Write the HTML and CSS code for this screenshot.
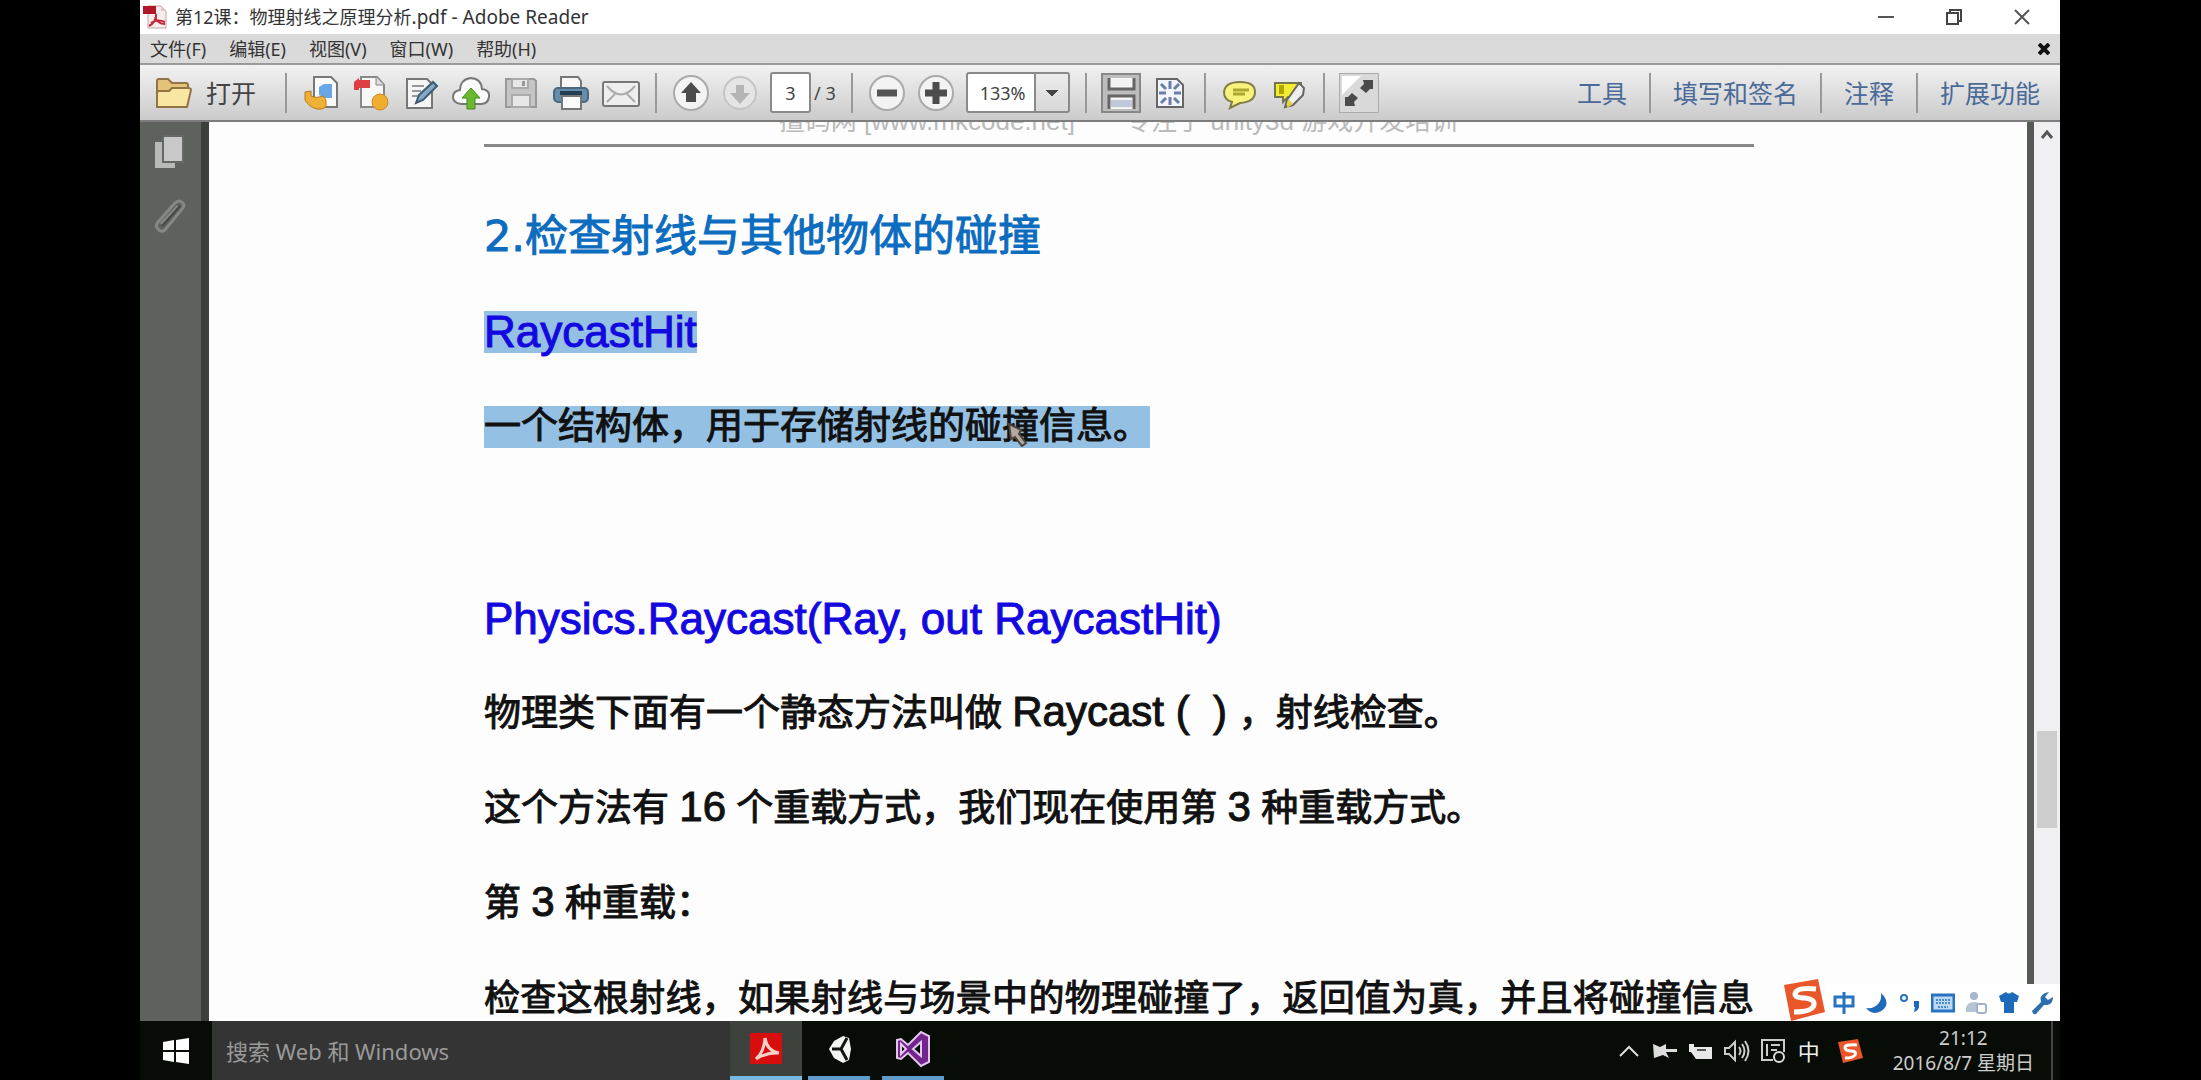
FILE: index.html
```html
<!DOCTYPE html>
<html lang="zh-CN">
<head>
<meta charset="utf-8">
<title>第12课：物理射线之原理分析.pdf - Adobe Reader</title>
<link rel="stylesheet" href="styles.css">
</head>
<body>
<div class="desktop">
  <header class="titlebar">
    <svg class="title-icon" viewBox="0 0 24 24"><path d="M5 1h13l5 5v17H5z" fill="#f7ecec" stroke="#c9a0a4"/><path d="M18 1v5h5" fill="#e4c4c6"/><path d="M0 1h13v8H0z" fill="#b01828"/><path d="M13 9c1 5-3 10-7 12M12 12c2 5 6 7 10 7M8 18c4-3 9-3 14-1" fill="none" stroke="#c2283a" stroke-width="2"/></svg>
    <h1 class="title-text">第12课：物理射线之原理分析<span class="title-latin">.pdf - Adobe Reader</span></h1>
    <div class="window-buttons">
      <button class="win-btn" aria-label="最小化"><svg viewBox="0 0 18 18"><path d="M1 9h16" stroke="#555" stroke-width="2"/></svg></button>
      <button class="win-btn" aria-label="还原"><svg viewBox="0 0 18 18"><path d="M5 5V2h11v11h-3M2 5h11v11H2z" fill="none" stroke="#444" stroke-width="2"/></svg></button>
      <button class="win-btn" aria-label="关闭"><svg viewBox="0 0 18 18"><path d="M2 2l14 14M16 2L2 16" stroke="#555" stroke-width="2"/></svg></button>
    </div>
  </header>

  <nav class="menubar">
    <button class="menu-item">文件(F)</button>
    <button class="menu-item">编辑(E)</button>
    <button class="menu-item">视图(V)</button>
    <button class="menu-item">窗口(W)</button>
    <button class="menu-item">帮助(H)</button>
    <button class="menu-close" aria-label="关闭文档"><svg viewBox="0 0 12 12"><path d="M1 1l10 10M11 1L1 11" stroke="#111" stroke-width="4"/></svg></button>
  </nav>

  <div class="toolbar">
    <button class="open-btn">
      <svg class="icon" viewBox="0 0 38 38"><path d="M3 32V7q0-2 2-2h9l4 4h14q2 0 2 2v5" fill="#e3c27a" stroke="#927443" stroke-width="2"/><path d="M3 33V19q0-2 2-2h10l3-3h16q3 0 3 2l-4 17z" fill="#fae6a3" stroke="#927443" stroke-width="2"/></svg>
      <span>打开</span>
    </button>
    <span class="sep"></span>
    <div class="tools tools-wide">
      <button class="tool" aria-label="创建 PDF"><svg class="icon" viewBox="0 0 38 38"><path d="M12 3h17l6 6v24H12z" fill="#fafafa" stroke="#777" stroke-width="2"/><path d="M17 13l5-3h8v14h-7l-6-3z" fill="#68a7e6"/><path d="M3 18l6-1v5q5 3 12 0l3 4v7q-4 3-9 2-8-2-12-9z" fill="#efb038" stroke="#b87918"/></svg></button>
      <button class="tool" aria-label="转换 PDF"><svg class="icon" viewBox="0 0 38 38"><path d="M9 3h16l7 8v22H9z" fill="#f7f7f7" stroke="#888" stroke-width="2"/><path d="M24 3v8h8" fill="#ddd" stroke="#888"/><path d="M2 8l5-4v2h11v8H7v2H2z" fill="#dc3e42"/><circle cx="28" cy="28" r="8" fill="#f0ae30" stroke="#cf8b20"/></svg></button>
      <button class="tool" aria-label="编辑"><svg class="icon" viewBox="0 0 38 38"><path d="M5 5h20l5 5v24H5z" fill="#f5f5f5" stroke="#777" stroke-width="2"/><path d="M10 12h12M10 17h9M10 22h6" stroke="#999" stroke-width="2"/><path d="M14 29l3-8 14-13 4 4-14 14z" fill="#82aac7" stroke="#3c5b72" stroke-width="2"/></svg></button>
      <button class="tool" aria-label="上传"><svg class="icon" viewBox="0 0 38 38"><path d="M9 30q-8-1-8-7 0-6 7-7 0-10 10-12 11 0 12 11 8 1 7 8-1 7-8 7z" fill="#fafafa" stroke="#777" stroke-width="2"/><path d="M19 14l9 10h-5v11h-8V24h-5z" fill="#6cb82c" stroke="#438a1b"/></svg></button>
      <button class="tool" aria-label="保存"><svg class="icon" viewBox="0 0 38 38"><path d="M4 5h28l2 2v26H4z" fill="#c5c5c5" stroke="#999" stroke-width="2"/><path d="M10 5h16v9H10zM10 21h18v12H10z" fill="#e7e7e7" stroke="#aaa" stroke-width="2"/><path d="M20 7h3v5h-3z" fill="#999"/></svg></button>
      <button class="tool" aria-label="打印"><svg class="icon" viewBox="0 0 38 38"><path d="M9 3h17l3 4v9H9z" fill="#f8f8f8" stroke="#777" stroke-width="2"/><rect x="2" y="14" width="34" height="14" rx="4" fill="#648ead" stroke="#4c687c" stroke-width="2"/><path d="M8 19h22" stroke="#263e52" stroke-width="4"/><path d="M10 22h19v13H10z" fill="#fafafa" stroke="#777" stroke-width="2"/></svg></button>
      <button class="tool" aria-label="邮件"><svg class="icon" viewBox="0 0 38 38"><rect x="1" y="8" width="36" height="24" rx="2" fill="#eee" stroke="#777" stroke-width="2"/><path d="M5 12q14 17 28 0M5 28l8-8M33 28l-8-8" fill="none" stroke="#aaa" stroke-width="2"/></svg></button>
    </div>
    <span class="sep"></span>
    <div class="tools">
      <button class="tool" aria-label="上一页"><svg class="icon" viewBox="0 0 38 38"><circle cx="19" cy="19" r="17" fill="#f3f3f3" stroke="#aaa" stroke-width="2"/><path d="M19 8l10 11h-5v9H14v-9H9z" fill="#4c4c4c"/></svg></button>
      <button class="tool" aria-label="下一页"><svg class="icon" viewBox="0 0 38 38"><circle cx="19" cy="19" r="16" fill="#e5e5e5" stroke="#c5c5c5" stroke-width="2"/><path d="M19 30L9 19h6v-8h8v8h6z" fill="#b4b4b4"/></svg></button>
      <div class="pager"><input class="page-input" value="3" aria-label="页码"><span>/ 3</span></div>
    </div>
    <span class="sep"></span>
    <div class="tools">
      <button class="tool" aria-label="缩小"><svg class="icon" viewBox="0 0 38 38"><circle cx="19" cy="19" r="17" fill="#f3f3f3" stroke="#aaa" stroke-width="2"/><path d="M9 19h20" stroke="#555" stroke-width="7"/></svg></button>
      <button class="tool" aria-label="放大"><svg class="icon" viewBox="0 0 38 38"><circle cx="19" cy="19" r="17" fill="#f3f3f3" stroke="#aaa" stroke-width="2"/><path d="M8 19h22M19 8v22" stroke="#4c4c4c" stroke-width="7"/></svg></button>
      <select class="zoom-select" aria-label="缩放比例"><option>133%</option></select>
    </div>
    <span class="sep"></span>
    <div class="tools">
      <button class="tool tool-pressed" aria-label="适合宽度"><svg class="icon" viewBox="0 0 38 38"><path d="M7 4v11h25V4M7 35V22h25v13" fill="#f4f4f4" stroke="#666" stroke-width="3"/><path d="M9 26h21v7H9z" fill="#c0c8dc"/></svg></button>
      <button class="tool" aria-label="适合页面"><svg class="icon" viewBox="0 0 38 38"><path d="M6 5h20l6 6v22H6z" fill="#f2f5fb" stroke="#666" stroke-width="2"/><path d="M19 7v8M19 31v-8M8 19h7M30 19h-7M10 10l5 5M28 10l-5 5M10 29l5-5M28 29l-5-5" stroke="#6b7ea8" stroke-width="3"/></svg></button>
    </div>
    <span class="sep"></span>
    <div class="tools">
      <button class="tool" aria-label="添加附注"><svg class="icon" viewBox="0 0 38 38"><path d="M11 28q-8-2-8-10Q4 8 19 8t15 10q0 10-15 11l-10 5z" fill="#f7f27c" stroke="#817d48" stroke-width="2"/><path d="M12 16h16M12 20h12" stroke="#aca52e" stroke-width="3"/></svg></button>
      <button class="tool" aria-label="高亮文本"><svg class="icon" viewBox="0 0 38 38"><path d="M5 9h26v14H18l-5 5v-5H5z" fill="#f3ec31" stroke="#77754b" stroke-width="2"/><path d="M9 11h5v9H9z" fill="#b1a500"/><path d="M17 26L29 9l5 5-1 7-10 10-8 2z" fill="#eee" stroke="#666" stroke-width="2"/><path d="M18 25l5 5-6 4z" fill="#e6d528"/></svg></button>
    </div>
    <span class="sep"></span>
    <button class="tool tool-framed" aria-label="阅读模式"><svg class="icon" viewBox="0 0 38 38"><path d="M2 2h19L2 21z" fill="#fff"/><path d="M23 6h10v9h-3l-4 4-6-5 4-4zM15 32H5v-9h3l4-4 6 5-4 4z" fill="#4b4b4b"/></svg></button>
    <div class="panels">
      <button class="panel-btn">工具</button>
      <button class="panel-btn">填写和签名</button>
      <button class="panel-btn">注释</button>
      <button class="panel-btn">扩展功能</button>
    </div>
  </div>

  <div class="workspace">
    <aside class="sidebar">
      <button class="side-btn" aria-label="页面缩略图"><svg class="side-icon" viewBox="0 0 32 34"><path d="M1 7h20v26H1z" fill="#b8bab7"/><path d="M9 1h20v26H9z" fill="#c8c8c8" stroke="#656965" stroke-width="2"/></svg></button>
      <button class="side-btn" aria-label="附件"><svg class="side-icon" viewBox="0 0 32 34"><path d="M7 25L24 7M4 23L21 4q4-4 8 0 2 3-1 6L11 31q-4 3-7-1-3-3 0-7z" fill="none" stroke="#858884" stroke-width="3"/><path d="M8 27L26 7" stroke="#444944" stroke-width="2"/></svg></button>
    </aside>
    <main class="page">
      <div class="page-header"><span>擅码网 [www.mkcode.net]</span><span>专注于 unity3d 游戏开发培训</span></div>
      <section class="topic">
        <h2 class="topic-title">2.检查射线与其他物体的碰撞</h2>
        <h3 class="api"><mark class="selected">RaycastHit</mark></h3>
        <p class="line"><mark class="selected">一个结构体，用于存储射线的碰撞信息。</mark><svg class="cursor" viewBox="0 0 20 24"><path d="M1 1l12 6-2 4 7 9-4 3-7-9-4 2z" fill="#b3a9a0" stroke="#4f443d" stroke-width="2"/></svg></p>
      </section>
      <section class="topic">
        <h3 class="api">Physics.Raycast(Ray, out RaycastHit)</h3>
        <p class="line">物理类下面有一个静态方法叫做 <span class="latin">Raycast ( &nbsp;) </span>，射线检查。</p>
        <p class="line">这个方法有 <span class="latin">16</span> 个重载方式，我们现在使用第 <span class="latin">3</span> 种重载方式。</p>
        <p class="line">第 <span class="latin">3</span> 种重载：</p>
        <p class="line line-full">检查这根射线，如果射线与场景中的物理碰撞了，返回值为真，并且将碰撞信息</p>
      </section>
    </main>
    <div class="scrollbar">
      <svg class="scroll-arrow" viewBox="0 0 14 10"><path d="M2 8l5-6 5 6" fill="none" stroke="#555" stroke-width="3"/></svg>
      <div class="scroll-space"></div>
      <div class="scroll-thumb"></div>
    </div>
    <div class="ime">
      <svg class="ime-logo" viewBox="0 0 42 42"><path d="M1 6L35 0l7 33-34 9z" fill="#e8562a"/><path d="M33 10q-20-2-21 5 0 4 10 4 10 1 9 7-2 7-20 7" fill="none" stroke="#fff" stroke-width="5"/></svg>
      <div class="ime-bar">
        <svg class="ime-icon" viewBox="0 0 24 24"><path d="M3 6h18v9H3zM12 1v22" fill="none" stroke="#2873bf" stroke-width="3"/></svg>
        <svg class="ime-icon" viewBox="0 0 24 24"><path d="M16 2q7 6 5 13-4 7-12 7-5-1-8-5 8 1 12-4 4-4 3-11z" fill="#1d69ba"/></svg>
        <svg class="ime-icon" viewBox="0 0 24 24"><circle cx="6" cy="7" r="3" fill="none" stroke="#2873bf" stroke-width="2"/><path d="M16 10h5v6q-1 4-5 5l1-5h-1z" fill="#1d69ba"/></svg>
        <svg class="ime-icon" viewBox="0 0 24 24"><rect x="1" y="4" width="22" height="16" fill="#bcd8f3" stroke="#2873bf" stroke-width="3"/><path d="M5 9h14M5 12h14M7 16h10" stroke="#4e8dcc" stroke-width="2" stroke-dasharray="2 1"/></svg>
        <svg class="ime-icon" viewBox="0 0 24 24"><circle cx="10" cy="5" r="4" fill="#a7b6cb"/><path d="M2 19q0-8 8-8t8 8v2H2z" fill="#b6c3d4"/><rect x="13" y="13" width="9" height="9" rx="2" fill="#fff" stroke="#a4b2c6" stroke-width="2"/></svg>
        <svg class="ime-icon" viewBox="0 0 24 24"><path d="M2 5l7-4q3 3 6 0l7 4-2 6h-3v11H7V11H4z" fill="#1d69ba"/></svg>
        <svg class="ime-icon" viewBox="0 0 24 24"><path d="M2 20l9-9q-2-6 4-9l4-1-4 5 3 3 5-3q0 7-6 8l-3 0-8 9q-3 1-4-3z" fill="#2b6fae"/></svg>
      </div>
    </div>
  </div>

  <footer class="taskbar">
    <button class="start" aria-label="开始"><svg class="start-icon" viewBox="0 0 26 26"><path d="M0 4l11-2v10H0zM13 2l13-2v12H13zM0 14h11v10L0 22zM13 14h13v12l-13-2z" fill="#fff"/></svg></button>
    <input class="search" placeholder="搜索 Web 和 Windows" aria-label="搜索">
    <button class="task task-active" aria-label="Adobe Reader"><svg class="task-icon" viewBox="0 0 36 36"><rect x="2" y="2" width="32" height="31" fill="#d80d0d"/><path d="M8 28q8-7 9-21 2 13 14 15-12-1-23 6z" fill="none" stroke="#ffd0c8" stroke-width="3"/></svg></button>
    <button class="task" aria-label="Unity"><svg class="task-icon" viewBox="0 0 36 36"><path d="M22 5l6 2 2 11-2 11-6 3-9-5-5-9 5-8z" fill="#f4f4f4"/><path d="M11 18h9l6-11M20 18l6 11" fill="none" stroke="#10150f" stroke-width="3"/></svg></button>
    <button class="task" aria-label="Visual Studio"><svg class="task-icon" viewBox="0 0 36 36"><path d="M2 9l4-1 7 6L26 1l8 4v26l-8 4-13-13-7 6-4-1zM6 13v10l5-5zM26 11l-8 7 8 7z" fill="#73258c" fill-rule="evenodd" stroke="#e4c8ef" stroke-width="2"/></svg></button>
    <div class="tray">
      <svg class="tray-icon" viewBox="0 0 26 26"><path d="M4 18l9-9 9 9" fill="none" stroke="#ddd" stroke-width="2"/></svg>
      <svg class="tray-icon" viewBox="0 0 26 26"><path d="M1 6l7 3 6-3v5h11v3H14l3 6-6-3-9 3z" fill="#ddd"/></svg>
      <svg class="tray-icon" viewBox="0 0 26 26"><path d="M1 6h5v3h18v12H8l-5-7H1z" fill="#e8e8e8"/><path d="M9 12h9" stroke="#555" stroke-width="2"/></svg>
      <svg class="tray-icon" viewBox="0 0 26 26"><path d="M1 10h4l6-6v18l-6-6H1zM15 9q3 4 0 8M18 6q5 7 0 14M21 3q7 10 0 20" fill="none" stroke="#ccc" stroke-width="2"/></svg>
      <svg class="tray-icon" viewBox="0 0 26 26"><path d="M13 22H2V2h22v12M7 6v12M11 7h9M11 12h6" fill="none" stroke="#ccc" stroke-width="2"/><circle cx="19" cy="19" r="5" fill="none" stroke="#ddd" stroke-width="2"/></svg>
      <span class="tray-lang">中</span>
      <svg class="tray-icon tray-ime" viewBox="0 0 26 26"><path d="M1 4l20-3 5 19-20 5z" fill="#e8562a"/><path d="M20 7Q7 6 8 10q1 3 6 3 6 0 4 4-2 3-10 3" fill="none" stroke="#fff" stroke-width="3"/></svg>
    </div>
    <div class="clock"><span>21:12</span><span>2016/8/7 星期日</span></div>
  </footer>
</div>
</body>
</html>
```
FILE: styles.css
```css
* { box-sizing: border-box; }

body {
  margin: 0;
  padding: 0 141px 0 140px;
  background: #000;
  font-family: "Noto Sans", "Noto Sans CJK SC", sans-serif;
  text-spacing-trim: space-all;
}

button, input, select {
  margin: 0;
  padding: 0;
  border: 0;
  background: none;
  color: inherit;
  font: inherit;
}

h1, h2, h3, p { margin: 0; font-weight: 400; }

svg { display: block; }

.desktop {
  display: flex;
  flex-direction: column;
  height: 100vh;
}

/* Title bar */
.titlebar {
  display: flex;
  align-items: center;
  height: 34px;
  padding: 0 29px 0 3px;
  background: #fff;
}
.title-icon { width: 24px; height: 24px; margin-right: 8px; }
.title-text {
  font-size: 18px;
  line-height: 24px;
  color: #333;
}
.title-latin { font-size: 19px; }
.window-buttons { display: flex; gap: 50px; margin-left: auto; }
.win-btn { width: 18px; height: 18px; }

/* Menu bar */
.menubar {
  display: flex;
  align-items: center;
  gap: 23px;
  height: 29px;
  padding: 0 10px;
  background: #dadada;
  font-size: 18px;
  line-height: 24px;
  color: #333;
}
.menu-close { width: 12px; height: 12px; margin-left: auto; }

/* Toolbar */
.toolbar {
  display: flex;
  align-items: center;
  height: 59px;
  padding: 0 18px 0 14px;
  border-top: 2px solid #999;
  border-bottom: 2px solid #7d7d7d;
  background: linear-gradient(#f2f2f2, #cbcbcb);
}
.icon { width: 38px; height: 38px; }
.open-btn {
  display: flex;
  align-items: center;
  gap: 14px;
  padding-right: 14px;
  font-size: 25px;
  line-height: 32px;
  color: #444;
}
.sep {
  width: 2px;
  height: 40px;
  margin: 0 15px;
  background: #999;
}
.tools { display: flex; align-items: center; gap: 11px; }
.tools-wide { gap: 12px; }
.tool { flex: none; width: 38px; height: 38px; }
.tool-pressed { background: #bdbdbd; outline: 2px solid #888; outline-offset: -1px; }
.tool-framed { background: #d9d9d9; outline: 1px solid #aaa; }
.pager {
  display: flex;
  align-items: center;
  gap: 3px;
  font-size: 18px;
  color: #444;
}
.page-input {
  width: 41px;
  height: 41px;
  border: 2px solid #8a8a8a;
  border-radius: 3px;
  background: #fff;
  font-size: 18px;
  text-align: center;
}
.zoom-select {
  appearance: none;
  width: 104px;
  height: 41px;
  padding-left: 12px;
  border: 2px solid #8a8a8a;
  border-radius: 3px;
  background:
    conic-gradient(from -45deg at 50% 100%, #444 90deg, transparent 0) right 10px center / 12px 6px no-repeat,
    linear-gradient(#8a8a8a, #8a8a8a) right 32px top / 2px 100% no-repeat,
    linear-gradient(#ececec, #d8d8d8) right top / 32px 100% no-repeat,
    #fff;
  font-size: 18px;
  color: #444;
}
.panels { display: flex; margin-left: auto; }
.panel-btn {
  height: 40px;
  padding: 0 22px;
  font-size: 25px;
  line-height: 32px;
  color: #4a6a97;
}
.panel-btn + .panel-btn { border-left: 2px solid #999; }
.panel-btn:last-child { padding-right: 2px; }

/* Document area */
.workspace {
  position: relative;
  display: flex;
  flex: 1;
  min-height: 0;
}
.sidebar {
  display: flex;
  flex-direction: column;
  flex: none;
  gap: 30px;
  width: 69px;
  padding: 13px 0 0 14px;
  border-right: 8px solid #3b403b;
  background: #5d635c;
}
.side-btn { width: 32px; height: 34px; }
.side-icon { width: 32px; height: 34px; }
.page {
  flex: 1;
  min-width: 0;
  padding: 0 273px 0 275px;
  overflow: hidden;
  background: #fdfdfd;
}
.page-header {
  display: flex;
  justify-content: center;
  gap: 50px;
  height: 25px;
  padding-right: 2px;
  border-bottom: 3px solid #888;
  font: 26px/26px "Liberation Sans", "Noto Sans CJK SC", sans-serif;
  color: #bbb;
}
.page-header span { margin-top: -14px; }
.topic {
  font-family: "Liberation Sans", "Noto Sans CJK SC", sans-serif;
  -webkit-text-stroke: 1px currentColor;
}
.topic:first-of-type { padding-top: 42px; }
.topic + .topic { padding-top: 97px; }
.topic-title {
  height: 95px;
  font: 43px/95px "DejaVu Sans", "Noto Sans CJK SC", sans-serif;
  color: #0b6cc0;
}
.api { height: 95px; font-size: 44px; line-height: 95px; color: #1408e0; }
.line {
  position: relative;
  height: 95px;
  font-size: 37px;
  line-height: 95px;
  white-space: nowrap;
  color: #111;
}
.line-full { font-size: 36px; text-align-last: justify; }
.latin { font-size: 42px; line-height: 42px; }
.selected {
  display: inline-block;
  height: 42px;
  line-height: 42px;
  background: #93c0e3;
  color: inherit;
}
.cursor { position: absolute; left: 524px; top: 44px; width: 20px; height: 24px; }

.scrollbar {
  display: flex;
  flex-direction: column;
  align-items: center;
  flex: none;
  width: 33px;
  padding: 8px 0 0;
  border-left: 7px solid #555a55;
  background: #f0eff1;
}
.scroll-arrow { width: 14px; height: 10px; }
.scroll-space { flex: 591; }
.scroll-thumb { width: 20px; height: 97px; background: #cdcdcd; }
.scrollbar::after { content: ""; flex: 193; }

/* Input-method bar floating above the page corner */
.ime {
  position: absolute;
  right: 0;
  bottom: 0;
  display: flex;
  align-items: flex-end;
}
.ime-logo { width: 42px; height: 42px; }
.ime-bar {
  display: flex;
  align-items: center;
  gap: 9px;
  height: 37px;
  padding: 0 6px 0 7px;
  background: #fff;
}
.ime-icon { width: 24px; height: 24px; }

/* Taskbar */
.taskbar {
  display: flex;
  height: 59px;
  padding-right: 7px;
  background: #070c07;
}
.start { display: flex; align-items: center; justify-content: center; width: 72px; }
.start-icon { width: 26px; height: 26px; }
.search {
  width: 518px;
  padding: 0 14px;
  background: #343434;
  font-size: 22px;
}
.search::placeholder { color: #9a9a9a; }
.task {
  display: flex;
  align-items: center;
  justify-content: center;
  width: 62px;
  margin: 0 6px;
  border-bottom: 4px solid #5f9bc8;
}
.task-active { width: 72px; margin: 0; background: #3d423d; border-color: #79b8e2; }
.task-icon { width: 36px; height: 36px; }
.tray {
  display: flex;
  align-items: center;
  gap: 10px;
  margin-left: auto;
  padding-right: 30px;
}
.tray-icon { width: 26px; height: 26px; }
.tray-lang { width: 26px; font-size: 22px; line-height: 26px; color: #eee; text-align: center; }
.tray-ime { margin-left: 5px; }
.clock {
  display: flex;
  flex-direction: column;
  align-items: center;
  justify-content: center;
  padding-right: 17px;
  border-right: 2px solid #444;
  font-size: 19px;
  line-height: 25px;
  color: #ccc;
}
```
